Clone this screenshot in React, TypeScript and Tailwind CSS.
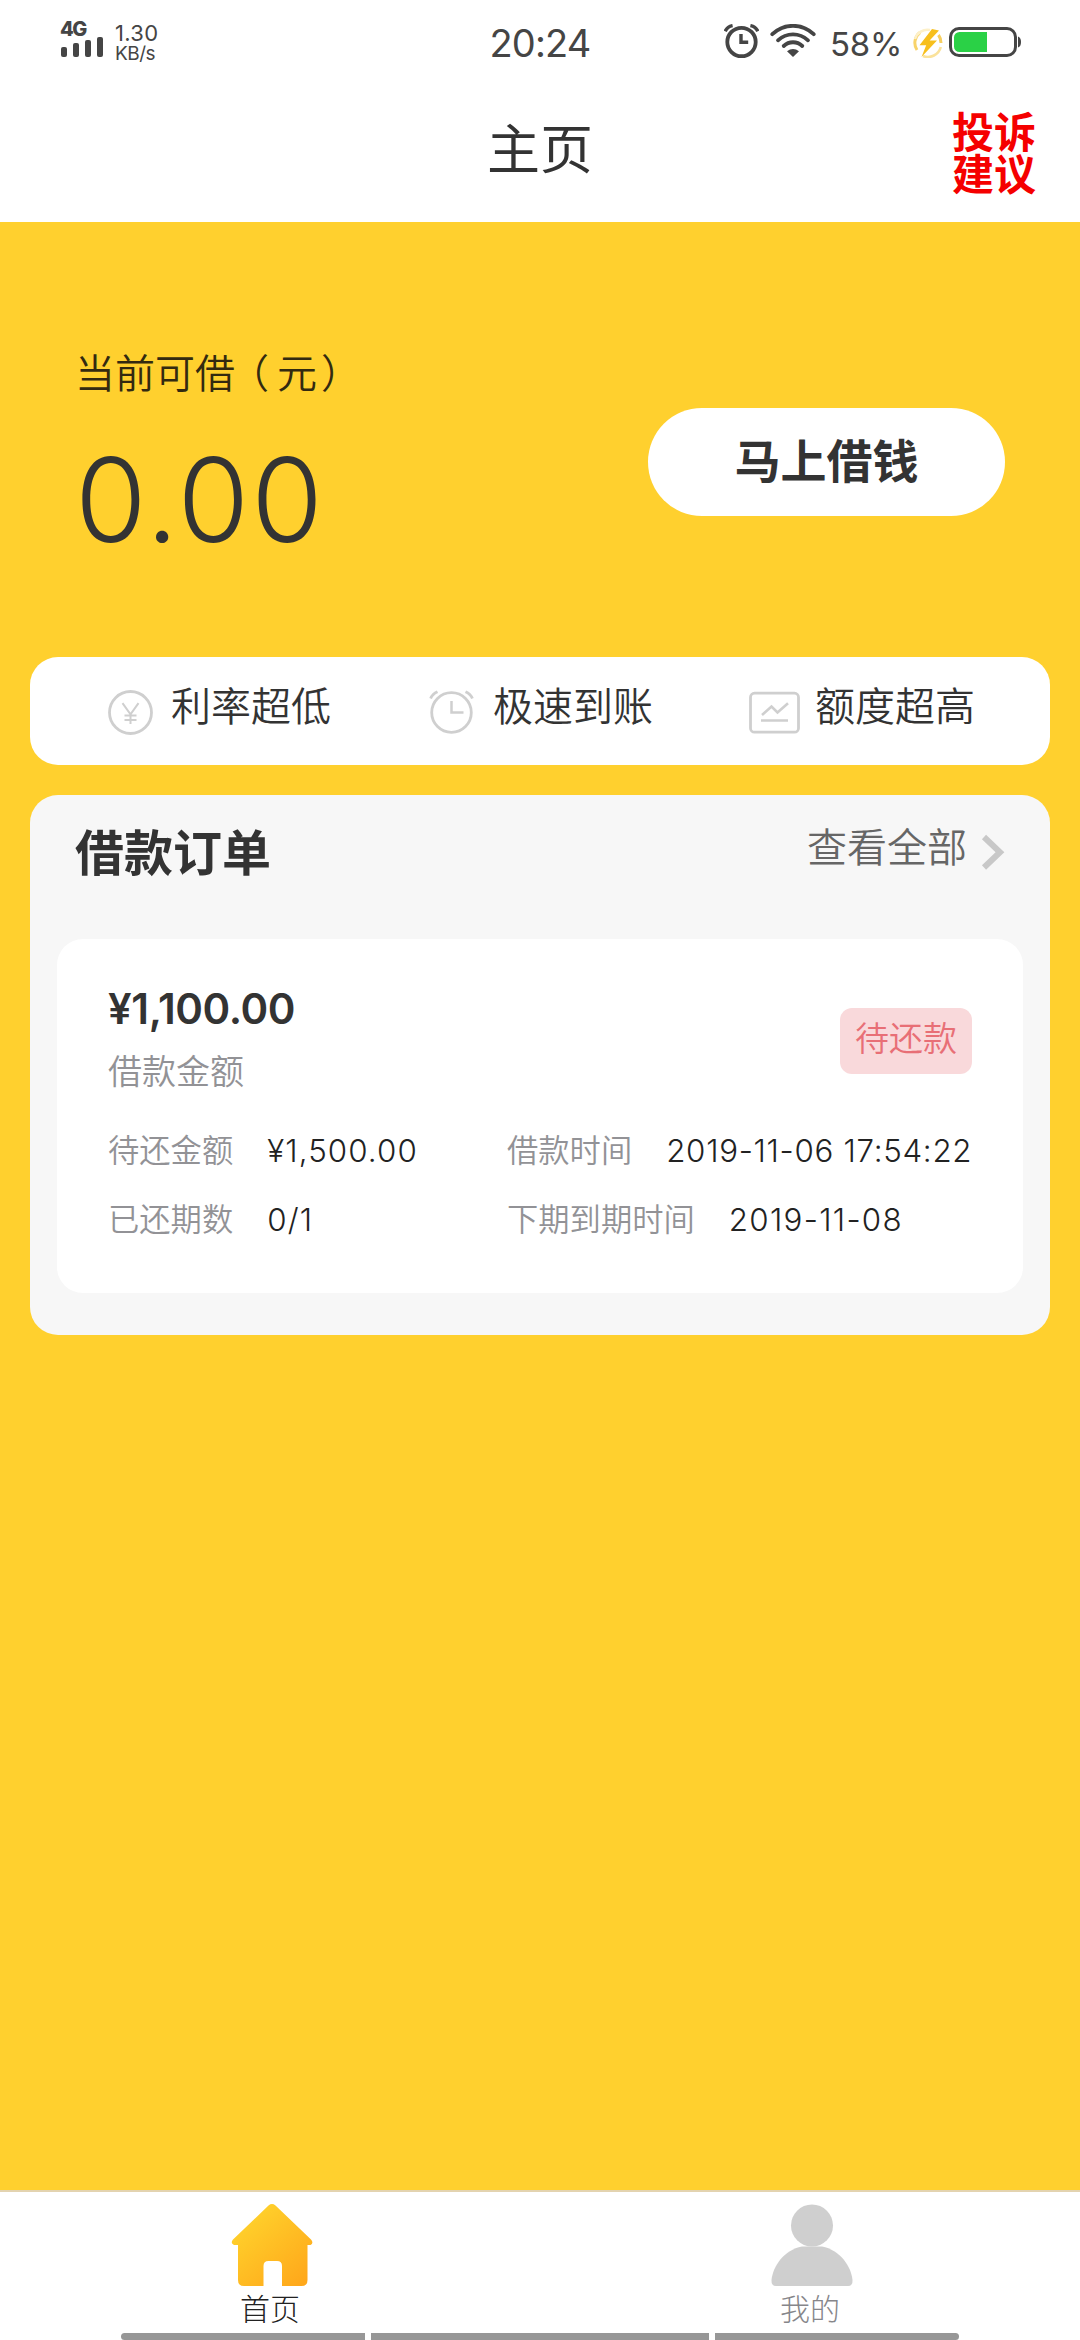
import React from "react";

const cjk = "font-['Noto_Sans_CJK_SC',sans-serif]";
const latin = "font-['Inter','Noto_Sans_CJK_SC',sans-serif]";

function SignalBars() {
  return (
    <div className="flex h-5 items-end gap-[6px] pl-[1px]">
      <div className="h-[10px] w-[6px] rounded-[2px] bg-[#454545]" />
      <div className="h-[14px] w-[6px] rounded-[2px] bg-[#454545]" />
      <div className="h-[17px] w-[6px] rounded-[2px] bg-[#454545]" />
      <div className="h-[20px] w-[6px] rounded-[2px] bg-[#454545]" />
    </div>
  );
}

function StatusAlarmIcon() {
  return (
    <svg className="h-[35px] w-[35px] shrink-0" viewBox="0 0 35 35" fill="none" stroke="#454545">
      <circle cx="17.5" cy="18" r="14.2" strokeWidth="3.8" />
      <path d="M17 10v8.3h7.2" strokeWidth="3.4" />
      <path d="M1.2 7.2Q3.4 2.6 8.6 1.6M33.8 7.2Q31.6 2.6 26.4 1.6" strokeWidth="3.4" />
    </svg>
  );
}

function WifiIcon() {
  return (
    <svg className="h-[34px] w-[46px] shrink-0" viewBox="0 0 46 34" fill="none" stroke="#454545" strokeWidth="3.8" strokeLinecap="round">
      <path d="M2.3 10.2C14 -1 32 -1 43.7 10.2" />
      <path d="M8 16.3C16.5 8.3 29.5 8.3 38 16.3" />
      <path d="M13.7 22C19 17 27 17 32.3 22" />
      <path d="M17 27.2Q23 22.8 29 27.2L23 33Z" fill="#454545" stroke="none" />
    </svg>
  );
}

function ChargeIcon() {
  return (
    <svg className="h-[30px] w-[30px] shrink-0" viewBox="0 0 30 30" fill="none">
      <path d="M4 22A13 13 0 0 1 7 4.5" stroke="#f8d36a" strokeWidth="3" />
      <path d="M10 28A13.3 13.3 0 0 0 27.8 19" stroke="#fae29b" strokeWidth="2.6" />
      <path d="M2 11A13 13 0 0 1 17 2" stroke="#fdf0c8" strokeWidth="2.4" />
      <path d="M25.5 7A13 13 0 0 1 28 15" stroke="#f6cf60" strokeWidth="3" />
      <path d="M19 1L6.5 17.2h6.7L8.5 29 24 12.6h-7.4L26 2.5Z" fill="#f7bf1c" />
    </svg>
  );
}

function BatteryIcon() {
  return (
    <svg className="h-[30px] w-[72px] shrink-0" viewBox="0 0 72 30" fill="none">
      <rect x="1.5" y="1.5" width="65" height="27" rx="8.5" stroke="#454545" strokeWidth="3" />
      <path d="M38 5H10.5a5.500 5.500 0 0 0-5.500 5.500v9a5.500 5.500 0 0 0 5.500 5.500H38Z" fill="#2ad146" />
      <path d="M69 9.500q3 1 3 5.500t-3 5.500Z" fill="#454545" />
    </svg>
  );
}

function StatusBar() {
  return (
    <div className={`${latin} flex h-[80px] text-[#454545]`}>
      <div className="flex w-[360px] pt-[20px] pl-[60px]">
        <div className="w-[55px]">
          <div className="h-[17px] text-[20px] leading-[18px] font-extrabold tracking-[-1.500px]">4G</div>
          <SignalBars />
        </div>
        <div>
          <div className="h-[24px] text-[22px] leading-[27px] tracking-[0.300px]">1.30</div>
          <div className="text-[19px] leading-[20px] tracking-[-0.500px]">KB/s</div>
        </div>
      </div>
      <div className="flex w-[360px] justify-center pt-[20px] text-[38px] leading-[47px] tracking-[-0.800px]">20:24</div>
      <div className="flex w-[360px] pt-[24px] pl-[4px]">
        <StatusAlarmIcon />
        <div className="w-[11px]" />
        <WifiIcon />
        <div className="ml-[14px] w-[82px] text-[33px] leading-[40px] tracking-[-0.200px] whitespace-nowrap">58%</div>
        <div className="pt-[4px] pl-[1px]">
          <ChargeIcon />
        </div>
        <div className="pt-[3px] pl-[6px]">
          <BatteryIcon />
        </div>
      </div>
    </div>
  );
}

function Header() {
  return (
    <header className="flex h-[142px] justify-between">
      <div className="w-[128px]" />
      <h1 className="pt-[38px] text-[53px] leading-[56px] text-[#333]">主页</h1>
      <div className="w-[128px] pt-[29px]">
        <button className="h-[84px] w-[84px] text-[42px] leading-[42px] font-bold text-[#f50000]">投诉建议</button>
      </div>
    </header>
  );
}

function YenIcon() {
  return (
    <svg className="h-[45px] w-[45px]" viewBox="0 0 45 45" fill="none" stroke="#cfcfcf">
      <circle cx="22.500" cy="22.500" r="21" strokeWidth="2.800" />
      <path d="M14.500 13.200l8 11.200 8-11.200M22.500 24v10M16.500 25.500h12M16.500 30h12" strokeWidth="2" />
    </svg>
  );
}

function ClockIcon() {
  return (
    <svg className="h-[45px] w-[45px]" viewBox="0 0 45 45" fill="none" stroke="#cfcfcf" strokeWidth="2.800">
      <circle cx="22.500" cy="22.500" r="19.800" />
      <path d="M22.500 11v11.500h12" strokeWidth="2.500" />
      <path d="M1.600 8.500Q3.500 4 8.500 1.800M43.400 8.500Q41.500 4 36.500 1.800" />
    </svg>
  );
}

function ChartIcon() {
  return (
    <svg className="h-[45px] w-[51px]" viewBox="0 0 51 45" fill="none" stroke="#cfcfcf" strokeWidth="2.800">
      <rect x="1.500" y="3.200" width="48" height="39" rx="4" />
      <path d="M13 25l9.500-8.500 6 6L39 13.200M12 30.500h27" strokeWidth="2.600" />
    </svg>
  );
}

function Feature({ icon, label, className }: { icon: React.ReactNode; label: string; className: string }) {
  return (
    <div className={`flex ${className}`}>
      <div className="pt-[33px]">{icon}</div>
      <div className="pt-[27px] text-[40px] leading-[40px] font-[350] whitespace-nowrap text-[#333]">{label}</div>
    </div>
  );
}

function Field({ label, value, className }: { label: string; value: string; className: string }) {
  return (
    <div className="flex h-[69px] pt-[14px] whitespace-nowrap">
      <span className="text-[31.300px] leading-[36px] font-[350] text-[#929296]">{label}</span>
      <span className={`${latin} ml-[34px] pt-[2px] text-[31.300px] leading-[36px] font-[350] text-[#222] ${className}`}>{value}</span>
    </div>
  );
}

function OrderCard() {
  return (
    <article className="mx-[27px] h-[354px] rounded-[26px] bg-white px-[51px] pt-[48px]">
      <div className="flex h-[130px] justify-between">
        <div>
          <div className={`${latin} h-[66px] text-[42px] leading-[44px] font-semibold tracking-[-0.400px] text-[#333]`}>¥1,100.00</div>
          <div className="text-[34px] leading-[34px] font-[350] text-[#929296]">借款金额</div>
        </div>
        <div className="mt-[21px] h-[66px] w-[132px] rounded-[12px] bg-[#f9d9db] pt-[12px] text-center text-[34px] leading-[34px] font-[350] text-[#e86f76]">
          待还款
        </div>
      </div>
      <div className="flex">
        <div className="w-[399px] shrink-0">
          <Field label="待还金额" value="¥1,500.00" className="tracking-[1.100px]" />
          <Field label="已还期数" value="0/1" className="tracking-[1.100px]" />
        </div>
        <div>
          <Field label="借款时间" value="2019-11-06 17:54:22" className="tracking-[0.700px]" />
          <Field label="下期到期时间" value="2019-11-08" className="tracking-[1.300px]" />
        </div>
      </div>
    </article>
  );
}

function HomeIcon() {
  return (
    <svg className="h-[82px] w-[82px]" viewBox="0 0 82 82">
      <defs>
        <linearGradient id="roof" x1="0.150" y1="0.100" x2="0.900" y2="0.950">
          <stop offset="0" stopColor="#ffd32c" />
          <stop offset="1" stopColor="#ffa81b" />
        </linearGradient>
      </defs>
      <path
        fill="url(#roof)"
        d="M37.500 1.500q3.500-2.800 7 0L80 35.500q3 3.500-.500 5.500H76.500v35q0 6-6 6H51V62q0-5-5-5H37.500q-5 0-5 5V82H13q-6 0-6-6V41H3Q-1 39 2 35.500Z"
      />
    </svg>
  );
}

function ProfileIcon() {
  return (
    <svg className="h-[82px] w-[82px]" viewBox="0 0 82 82" fill="#cfcfcf">
      <circle cx="41" cy="21.500" r="21" />
      <path d="M31 42.500h20C69 46 80 62 81.500 76q.300 6-4.500 6H5Q.200 82 .500 76C2 62 13 46 31 42.500Z" />
    </svg>
  );
}

function TabBar() {
  return (
    <nav className="h-[150px] border-t-[2px] border-[#e3d3b0] bg-white">
      <div className="flex h-[141px] text-[30px] leading-[30px] font-light">
        <div className="flex w-[540px] flex-col items-center pt-[12px] pl-[3px]">
          <HomeIcon />
          <span className="mt-[6px] mr-[3px] text-[#222]">首页</span>
        </div>
        <div className="flex w-[540px] flex-col items-center pt-[12px] pl-[3px]">
          <ProfileIcon />
          <span className="mt-[6px] mr-[3px] text-[#86868a]">我的</span>
        </div>
      </div>
      <div className="flex h-[7px] justify-center gap-[6px]">
        <div className="w-[244px] rounded-l-full bg-[#979797]" />
        <div className="w-[338px] bg-[#979797]" />
        <div className="w-[244px] rounded-r-full bg-[#979797]" />
      </div>
    </nav>
  );
}

export default function App() {
  return (
    <div className={`${cjk} flex h-[2340px] w-[1080px] flex-col overflow-hidden bg-white`}>
      <StatusBar />
      <Header />
      <main className="flex-1 bg-[#ffd02e] px-[30px]">
        <section className="flex h-[435px] justify-between pr-[45px] pl-[45px]">
          <div>
            <div className="flex pt-[127px] text-[40px] leading-[44px] font-[350] text-[#332a10]">
              <span>当前可借</span>
              <span className="mr-[8px] ml-[14px] [font-feature-settings:'halt']">（</span>
              <span>元</span>
              <span className="ml-[4px]">）</span>
            </div>
            <div className={`${latin} mt-[37px] text-[116px] leading-[140px] font-[350] tracking-[2px] text-[#333]`}>0.00</div>
          </div>
          <button className="mt-[186px] h-[108px] w-[357px] rounded-full bg-white pb-[8px] text-[46px] leading-[46px] font-bold text-[#333]">
            马上借钱
          </button>
        </section>
        <section className="flex h-[108px] rounded-[28px] bg-white pl-[78px]">
          <Feature icon={<YenIcon />} label="利率超低" className="w-[321px] gap-[18px]" />
          <Feature icon={<ClockIcon />} label="极速到账" className="w-[320px] gap-[19px]" />
          <Feature icon={<ChartIcon />} label="额度超高" className="gap-[15px]" />
        </section>
        <section className="mt-[30px] h-[540px] rounded-[28px] bg-[#f7f7f7]">
          <div className="flex h-[144px] justify-between pr-[45px] pl-[45px]">
            <h2 className="pt-[30px] text-[49px] leading-[49px] font-bold text-[#333]">借款订单</h2>
            <div className="flex">
              <span className="pt-[28px] text-[40px] leading-[44px] font-[350] text-[#666]">查看全部</span>
              <svg className="mt-[39px] ml-[14px] h-[36px] w-[24px]" viewBox="0 0 24 36" fill="none" stroke="#c8c8c8" strokeWidth="6">
                <path d="M3 3l16 15.200L3 33.500" />
              </svg>
            </div>
          </div>
          <OrderCard />
        </section>
      </main>
      <TabBar />
    </div>
  );
}
